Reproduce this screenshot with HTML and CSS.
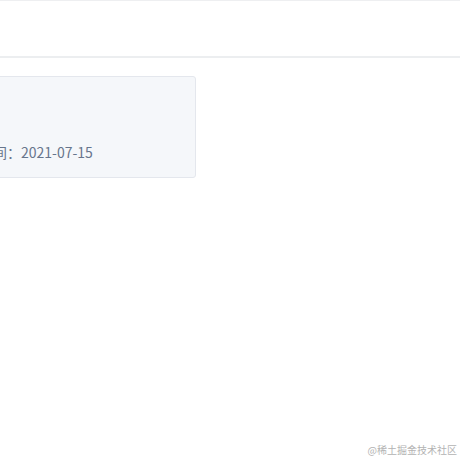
FILE: index.html
```html
<!DOCTYPE html>
<html>
<head>
<meta charset="utf-8">
<link rel="stylesheet" href="styles.css">
</head>
<body>
<div class="page">
  <header class="header"></header>
  <main class="content">
    <div class="card">
      <div class="card-title"></div>
      <div class="card-meta"><span class="label">时间：</span><span class="value">2021-07-15</span></div>
    </div>
  </main>
</div>
<div class="watermark">@稀土掘金技术社区</div>
</body>
</html>
```

FILE: styles.css
```css
html, body {
  margin: 0;
  padding: 0;
  background: #ffffff;
  overflow: hidden;
}
body {
  width: 460px;
  height: 460px;
  position: relative;
  font-family: "Noto Sans CJK SC", "Noto Sans", sans-serif;
}
.page {
  display: flex;
  flex-direction: column;
}
.header {
  height: 55px;
  border-top: 1px solid #eeeff1;
  border-bottom: 2px solid #eceef0;
}
.content {
  padding-top: 18px;
}
.card {
  width: 236px;
  height: 102px;
  margin-left: -40px;
  box-sizing: border-box;
  background: #f5f7fa;
  border: 1px solid #e4e7ed;
  border-radius: 3px;
  padding: 0 18px;
  display: flex;
  flex-direction: column;
  justify-content: flex-end;
}
.card-meta {
  font-size: 14px;
  line-height: 20px;
  color: #67758c;
  padding-bottom: 15px;
}
.watermark {
  position: absolute;
  right: 3px;
  bottom: 3px;
  font-size: 10px;
  line-height: 14px;
  color: #b3b3b3;
  font-family: "Noto Sans CJK SC", sans-serif;
}
```
